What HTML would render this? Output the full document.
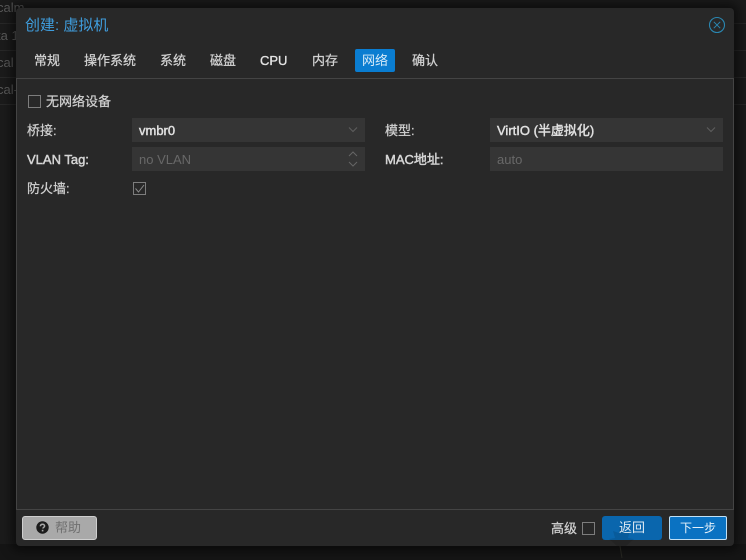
<!DOCTYPE html>
<html><head><meta charset="utf-8">
<style>
html,body{margin:0;padding:0;width:746px;height:560px;overflow:hidden;background:#1b1b1b;}
body{position:relative;font-family:"Liberation Sans","Noto Sans CJK SC",sans-serif;font-size:13px;color:#dfdfdf;}
.a{position:absolute;white-space:nowrap;line-height:16px;}
.b{position:absolute;}
.bg{color:#5a5a5a;left:-3px;font-size:13px;}
.line{position:absolute;left:0;width:746px;height:1px;background:#282828;}
#dlg{position:absolute;left:16px;top:8px;width:718px;height:538px;background:#282828;border-radius:4px;box-shadow:0 0 10px 5px rgba(0,0,0,.5);}
.tab{font-size:13px;color:#d2d2d2;-webkit-text-stroke:.25px #d2d2d2;top:53px;}
.lab{font-size:13px;color:#d0d0d0;-webkit-text-stroke:.25px #d0d0d0;}
.fld{position:absolute;height:24px;background:#353535;}
.val{font-size:13px;color:#e0e0e0;-webkit-text-stroke:.45px #e0e0e0;}
.ph{font-size:13px;color:#686868;}
.cb{position:absolute;width:11px;height:11px;border:1px solid #7d7d7d;}
</style></head><body>
<div class="line" style="top:23px"></div><div class="line" style="top:50px"></div><div class="line" style="top:77px"></div><div class="line" style="top:104px"></div>
<div class="line" style="top:544px;background:#151515;height:16px"></div>
<div class="a bg" style="top:0px">calm</div>
<div class="a bg" style="top:28px">ta 1</div>
<div class="a bg" style="top:55px">cal</div>
<div class="a bg" style="top:82px">cal-</div>

<div id="dlg"></div>
<div class="b" style="left:16px;top:78px;width:716px;height:430px;border:1px solid #444;"></div>

<div class="a" style="left:25px;top:18px;font-size:15px;color:#3f9ddd;">创建: 虚拟机</div>
<svg class="b" style="left:708px;top:16px" width="18" height="18" viewBox="0 0 18 18" fill="none" stroke="#2a86b0"><circle cx="9" cy="9" r="7.5" stroke-width="1.1"/><path d="M5.8 5.8l6.4 6.4M12.2 5.8l-6.4 6.4" stroke-width="1"/></svg>

<div class="a tab" style="left:34px">常规</div>
<div class="a tab" style="left:84px">操作系统</div>
<div class="a tab" style="left:160px">系统</div>
<div class="a tab" style="left:210px">磁盘</div>
<div class="a tab" style="left:260px;color:#e4e4e4;-webkit-text-stroke:.35px #e4e4e4">CPU</div>
<div class="a tab" style="left:312px">内存</div>
<div class="b" style="left:355px;top:49px;width:40px;height:23px;background:#0a7dd1;border-radius:2px;"></div>
<div class="a tab" style="left:362px;color:#d8ebf8;-webkit-text-stroke:0">网络</div>
<div class="a tab" style="left:412px">确认</div>

<div class="cb" style="left:28px;top:95px"></div>
<div class="a lab" style="left:46px;top:94px">无网络设备</div>

<div class="a lab" style="left:27px;top:123px">桥接:</div>
<div class="fld" style="left:132px;top:118px;width:233px"></div>
<div class="a val" style="left:139px;top:123px">vmbr0</div>
<svg class="b" style="left:347px;top:124px" width="12" height="12" fill="none" stroke="#5f5f5f" stroke-width="1"><path d="M2 3.5l4 4 4-4"/></svg>

<div class="a lab" style="left:385px;top:123px">模型:</div>
<div class="fld" style="left:490px;top:118px;width:233px"></div>
<div class="a val" style="left:497px;top:123px">VirtIO (半虚拟化)</div>
<svg class="b" style="left:705px;top:124px" width="12" height="12" fill="none" stroke="#5f5f5f" stroke-width="1"><path d="M2 3.5l4 4 4-4"/></svg>

<div class="a lab" style="left:27px;top:152px;-webkit-text-stroke:.45px #dcdcdc">VLAN Tag:</div>
<div class="fld" style="left:132px;top:147px;width:233px"></div>
<div class="a ph" style="left:139px;top:152px">no VLAN</div>
<svg class="b" style="left:347px;top:150px" width="12" height="18" fill="none" stroke="#666" stroke-width="1"><path d="M2 6l4-4 4 4M2 12l4 4 4-4"/></svg>

<div class="a lab" style="left:385px;top:152px;-webkit-text-stroke:.45px #dcdcdc">MAC地址:</div>
<div class="fld" style="left:490px;top:147px;width:233px"></div>
<div class="a ph" style="left:497px;top:152px">auto</div>

<div class="a lab" style="left:27px;top:181px">防火墙:</div>
<div class="cb" style="left:133px;top:182px"></div>
<svg class="b" style="left:133px;top:182px" width="13" height="13" fill="none" stroke="#8a8a8a" stroke-width="1"><path d="M2.5 6.5l3 3.5 5.5-7"/></svg>

<div class="b" style="left:22px;top:516px;width:73px;height:22px;background:#a9a9a9;border:1px solid #cfcfcf;border-radius:3px;"></div>
<svg class="b" style="left:36px;top:521px" width="13" height="13" viewBox="0 0 13 13"><circle cx="6.5" cy="6.5" r="6.2" fill="#1c1c1c"/><path d="M4.4 5.2c0-1.3 1-1.9 2.1-1.9s2.1.6 2.1 1.7c0 1.3-1.7 1.3-1.7 2.5" fill="none" stroke="#a9a9a9" stroke-width="1.5"/><rect x="5.8" y="8.8" width="1.6" height="1.6" fill="#a9a9a9"/></svg>
<div class="a" style="left:55px;top:520px;font-size:13px;color:#707070;">帮助</div>

<div class="a lab" style="left:551px;top:521px">高级</div>
<div class="cb" style="left:582px;top:522px"></div>

<div class="b" style="left:602px;top:516px;width:60px;height:24px;background:#0a66ad;border-radius:3px;"></div>
<svg class="b" style="left:602px;top:522px" width="40" height="36" fill="rgba(0,0,0,.1)" stroke="none"><path d="M18 4l4 7 6-2-2 7 6 1-8 7h-9l-8-7 6-1-2-7 6 2z"/><path d="M18 24l2 12" stroke="rgba(90,90,70,.25)" fill="none"/></svg>
<div class="a" style="left:619px;top:520px;font-size:13px;color:#dfe9f2;">返回</div>
<div class="b" style="left:669px;top:516px;width:56px;height:22px;background:#0a72c2;border:1px solid #c0e0f6;border-radius:2px;"></div>
<div class="a" style="left:680px;top:520px;font-size:12px;color:#e6f2fb;">下一步</div>
</body></html>
